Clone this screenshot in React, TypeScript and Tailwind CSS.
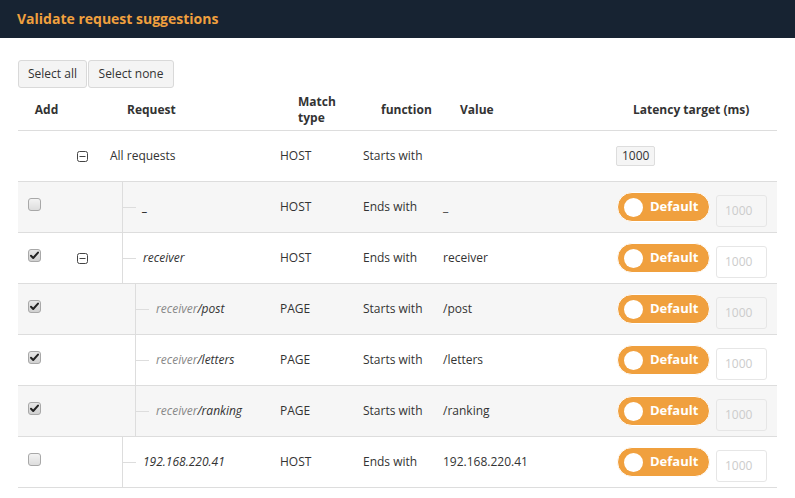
import React from "react";

type Row = {
  checked: boolean;
  expand?: boolean;
  depth: number;
  prefix?: string;
  name: string;
  match: string;
  fn: string;
  value: string;
  stripe: boolean;
};

const rows: Row[] = [
  { checked: false, depth: 1, name: "_", match: "HOST", fn: "Ends with", value: "_", stripe: true },
  { checked: true, expand: true, depth: 1, name: "receiver", match: "HOST", fn: "Ends with", value: "receiver", stripe: false },
  { checked: true, depth: 2, prefix: "receiver", name: "/post", match: "PAGE", fn: "Starts with", value: "/post", stripe: true },
  { checked: true, depth: 2, prefix: "receiver", name: "/letters", match: "PAGE", fn: "Starts with", value: "/letters", stripe: false },
  { checked: true, depth: 2, prefix: "receiver", name: "/ranking", match: "PAGE", fn: "Starts with", value: "/ranking", stripe: true },
  { checked: false, depth: 1, name: "192.168.220.41", match: "HOST", fn: "Ends with", value: "192.168.220.41", stripe: false },
];

function Collapse() {
  return (
    <svg width="11" height="11" viewBox="0 0 11 11" className="block">
      <rect x="0.5" y="0.5" width="10" height="10" rx="2" fill="none" stroke="#444" strokeWidth="1" />
      <line x1="2.5" y1="5.5" x2="8.5" y2="5.5" stroke="#444" strokeWidth="1" />
    </svg>
  );
}

function Check({ checked }: { checked: boolean }) {
  return (
    <svg width="13" height="13" viewBox="0 0 13 13" className="block">
      <defs>
        <linearGradient id={checked ? "gc" : "gu"} x1="0" y1="0" x2="0" y2="1">
          <stop offset="0" stopColor={checked ? "#e8e8e8" : "#f4f4f4"} />
          <stop offset="1" stopColor={checked ? "#cfcfcf" : "#dcdcdc"} />
        </linearGradient>
      </defs>
      <rect x="0.5" y="0.5" width="12" height="12" rx="2.5" fill={`url(#${checked ? "gc" : "gu"})`} stroke="#a8a8a8" />
      {checked && (
        <path d="M3 6.8 L5.2 9 L10 3.6" fill="none" stroke="#222" strokeWidth="2" strokeLinecap="round" strokeLinejoin="round" />
      )}
    </svg>
  );
}

function Toggle() {
  return (
    <div className="flex items-center h-[30px] w-[93px] rounded-full bg-[#f0a03e] border border-white box-border">
      <div className="ml-[6px] w-[19px] h-[19px] rounded-full bg-white" />
      <span className="ml-[7px] text-[13px] font-bold text-white">Default</span>
    </div>
  );
}

export default function App() {
  return (
    <div className="w-[795px] h-[498px] bg-white text-[#333] text-[12px] overflow-hidden" style={{ fontFamily: '"Open Sans", "Liberation Sans", sans-serif' }}>
      <div className="h-[38px] bg-[#172332] flex items-center pl-[17px]">
        <span className="text-[14px] font-bold text-[#f0a03e] -mt-[1px]">Validate request suggestions</span>
      </div>
      <div className="px-[18px]">
        <div className="mt-[22px] flex gap-[1px] h-[28px]">
          <button className="h-[28px] w-[69px] bg-[#f4f4f4] border border-[#d9d9d9] rounded-[3px] text-[12px] text-[#333]">Select all</button>
          <button className="h-[28px] w-[86px] bg-[#f4f4f4] border border-[#d9d9d9] rounded-[3px] text-[12px] text-[#333]">Select none</button>
        </div>
        <div className="flex items-center h-[43px] border-b border-[#dddddd] font-bold pt-[1px]">
          <div className="w-[57px] text-center">Add</div>
          <div className="w-[35px]" />
          <div className="w-[170px] pl-[17px]">Request</div>
          <div className="w-[83px] pl-[18px] leading-[16px]">Match<br />type</div>
          <div className="w-[80px] pl-[18px]">function</div>
          <div className="w-[140px] pl-[17px]">Value</div>
          <div className="flex-1 pl-[50px]">Latency target (ms)</div>
        </div>
        <div className="flex items-center h-[51px] border-b border-[#dddddd]">
          <div className="w-[57px]" />
          <div className="w-[35px] pl-[2px]"><Collapse /></div>
          <div className="w-[170px]">All requests</div>
          <div className="w-[83px]">HOST</div>
          <div className="w-[80px]">Starts with</div>
          <div className="w-[140px]" />
          <div className="flex-1 pl-[33px]">
            <span className="inline-block h-[20px] leading-[18px] px-[5px] bg-[#f5f5f5] border border-[#dddddd] rounded-[2px]">1000</span>
          </div>
        </div>
        {rows.map((r, i) => (
          <div key={i} className={`flex h-[51px] border-b border-[#dddddd] ${r.stripe ? "bg-[#f6f6f6]" : "bg-white"}`}>
            <div className="w-[57px] pl-[10px] pt-[16px]"><Check checked={r.checked} /></div>
            <div className="w-[35px] pl-[2px] flex items-center">{r.expand && <Collapse />}</div>
            <div className="w-[170px] flex items-center">
              <div className={`h-full border-l border-[#dddddd] ${r.depth === 1 ? "ml-[12px]" : "ml-[25px]"}`} />
              <div className="w-[13px] h-px bg-[#dddddd]" />
              <span className="ml-[7px] italic">
                {r.prefix && <span className="text-[#888]">{r.prefix}</span>}
                {r.name}
              </span>
            </div>
            <div className="w-[83px] flex items-center">{r.match}</div>
            <div className="w-[80px] flex items-center">{r.fn}</div>
            <div className="w-[140px] flex items-center">{r.value}</div>
            <div className="flex-1 pl-[34px] flex items-start">
              <div className="mt-[10px]"><Toggle /></div>
              <div className="ml-[6px] mt-[13px] w-[51px] h-[32px] border border-[#e6e6e6] rounded-[3px] flex items-center pl-[8px] text-[#cccccc]">1000</div>
            </div>
          </div>
        ))}
      </div>
    </div>
  );
}
